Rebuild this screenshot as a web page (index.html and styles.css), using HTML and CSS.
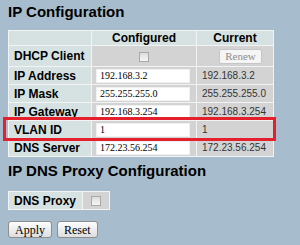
FILE: index.html
```html
<!DOCTYPE html>
<html lang="en">
<head>
    <meta charset="UTF-8">
    <title>IP Configuration</title>
    <link rel="stylesheet" href="styles.css">
</head>
<body>

<h1 class="title">IP Configuration</h1>

<div class="config-wrap">
    <table class="config">
        <colgroup>
            <col class="col-label">
            <col class="col-conf">
            <col class="col-cur">
        </colgroup>
        <thead>
            <tr>
                <th></th>
                <th>Configured</th>
                <th>Current</th>
            </tr>
        </thead>
        <tbody>
            <tr class="row-dhcp">
                <td class="label">DHCP Client</td>
                <td class="center"><input type="checkbox" class="chk" disabled></td>
                <td class="center"><button class="renew" disabled>Renew</button></td>
            </tr>
            <tr>
                <td class="label">IP Address</td>
                <td class="field"><input type="text" class="ip" value="192.168.3.2"></td>
                <td class="current">192.168.3.2</td>
            </tr>
            <tr>
                <td class="label">IP Mask</td>
                <td class="field"><input type="text" class="ip" value="255.255.255.0"></td>
                <td class="current">255.255.255.0</td>
            </tr>
            <tr>
                <td class="label">IP Gateway</td>
                <td class="field"><input type="text" class="ip" value="192.168.3.254"></td>
                <td class="current">192.168.3.254</td>
            </tr>
            <tr>
                <td class="label">VLAN ID</td>
                <td class="field"><input type="text" class="ip" value="1"></td>
                <td class="current">1</td>
            </tr>
            <tr>
                <td class="label">DNS Server</td>
                <td class="field"><input type="text" class="ip" value="172.23.56.254"></td>
                <td class="current">172.23.56.254</td>
            </tr>
        </tbody>
    </table>
    <!-- red marker around the VLAN row -->
    <div class="highlight"></div>
</div>

<h2 class="title title-second">IP DNS Proxy Configuration</h2>

<table class="config proxy">
    <tr>
        <td class="label">DNS Proxy</td>
        <td class="center proxy-box"><input type="checkbox" class="chk" disabled></td>
    </tr>
</table>

<div class="actions">
    <button class="btn">Apply</button>
    <button class="btn">Reset</button>
</div>

</body>
</html>
```

FILE: styles.css
```css
body {
    margin: 0;
    padding: 0 8px;
    background-color: #a7bccc;
    color: #000;
    font-family: 'Liberation Sans', Arial, sans-serif;
    overflow: hidden;
}

.title {
    margin: 3px 0 0;
    font-size: 15px;
    line-height: 18px;
    font-weight: bold;
}

.title-second {
    margin-top: 5px;
}

.config-wrap {
    position: relative;
    margin-top: 9px;
    width: 265px;
}

.config {
    border-collapse: collapse;
    table-layout: fixed;
    width: 265px;
}

.col-label { width: 83px; }
.col-conf { width: 105px; }
.col-cur { width: 77px; }

.config th,
.config td {
    border: 1px solid #f3f3f3;
    padding: 0 5px;
    height: 17px;
    font-size: 12px;
    line-height: 14px;
    white-space: nowrap;
}

.config th {
    height: 14px;
    background-color: #d6e2e2;
    font-weight: bold;
    text-align: center;
}

.config td {
    background-color: #d3d3d3;
}

.config td.label {
    background-color: #d6e2e2;
    font-weight: bold;
}

.row-dhcp td {
    height: 20px;
}

.center {
    text-align: center;
}

.field {
    padding-left: 4px !important;
}

.current {
    font-size: 10px !important;
    color: #333;
}

.ip {
    box-sizing: border-box;
    display: block;
    width: 94px;
    height: 14px;
    margin: 0;
    padding: 0 3px;
    border: 1px solid #f0f0f0;
    background-color: #fff;
    font-family: 'Liberation Serif', 'Times New Roman', serif;
    font-size: 10px;
    color: #000;
}

.chk {
    appearance: none;
    -webkit-appearance: none;
    display: inline-block;
    vertical-align: middle;
    width: 10px;
    height: 10px;
    margin: 0;
    border: 1px solid #a8a8a8;
    background: linear-gradient(#dedede, #f4f4f4);
}

.renew {
    box-sizing: border-box;
    width: 43px;
    height: 15px;
    margin: 0 0 0 11px;
    padding: 0;
    border: 1px solid #c6c6c6;
    border-radius: 2px;
    background-color: #f5f5f5;
    color: #8c8c8c;
    font-family: 'Liberation Serif', 'Times New Roman', serif;
    font-size: 11px;
    line-height: 12px;
    vertical-align: middle;
}

.highlight {
    position: absolute;
    top: 87px;
    left: -5px;
    width: 267px;
    height: 18px;
    border: 3px solid #e3202b;
}

.proxy {
    width: auto;
    margin-top: 11px;
}

.proxy .label {
    width: 63px;
}

.proxy-box {
    width: 16px;
}

.actions {
    display: flex;
    gap: 5px;
    margin-top: 11px;
}

.btn {
    box-sizing: border-box;
    height: 17px;
    padding: 0 6px;
    border: 1px solid #8e8e8e;
    border-radius: 3px;
    background: linear-gradient(#fdfdfd, #dedede);
    color: #000;
    font-family: 'Liberation Serif', 'Times New Roman', serif;
    font-size: 12px;
    line-height: 14px;
}
```
